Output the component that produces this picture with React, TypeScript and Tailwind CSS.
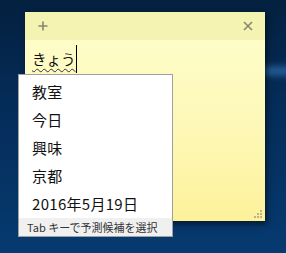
import React from "react";

const items = ["教室", "今日", "興味", "京都", "2016年5月19日"];

export default function App() {
  return (
    <div className="relative w-[286px] h-[253px] overflow-hidden bg-[linear-gradient(180deg,#04203f_0%,#052c58_40%,#063a70_100%)] [font-family:'Noto_Sans_CJK_JP','Noto_Sans',sans-serif]">
      {/* wallpaper streak */}
      <div className="absolute left-[262px] top-[66px] w-[40px] h-[10px] rounded-full bg-[#2f6fae] opacity-70 blur-[3px]" />

      {/* sticky note window */}
      <div className="absolute left-[25px] top-[12px] w-[240px] h-[209px] flex flex-col shadow-[2px_3px_6px_rgba(0,0,0,0.55)]">
        <div className="h-[28px] shrink-0 bg-[#f5f3b2] flex items-center justify-between pl-[13px] pr-[12px]">
          <svg width="10" height="10" viewBox="0 0 10 10">
            <path d="M5 0.5V9.5M0.5 5H9.5" stroke="#868670" strokeWidth="1.6" />
          </svg>
          <svg width="10" height="10" viewBox="0 0 10 10">
            <path d="M1 1L9 9M9 1L1 9" stroke="#868670" strokeWidth="1.6" />
          </svg>
        </div>
        <div className="flex-1 relative bg-[linear-gradient(180deg,#fefcc8_0%,#fdf8b6_50%,#fdf19a_100%)] pl-[7px] pt-[5px]">
          <div className="flex items-start">
            <span className="text-[14.5px] leading-[28px] text-[#111] underline decoration-wavy decoration-[#333] decoration-1 underline-offset-[3px]">
              きょう
            </span>
            <span className="w-px h-[28px] bg-black" />
          </div>
          <svg className="absolute right-[2px] bottom-[2px]" width="9" height="9" viewBox="0 0 9 9">
            <rect x="6" y="0" width="2" height="2" fill="#b9b48a" />
            <rect x="3" y="3" width="2" height="2" fill="#b9b48a" />
            <rect x="6" y="3" width="2" height="2" fill="#b9b48a" />
            <rect x="0" y="6" width="2" height="2" fill="#b9b48a" />
            <rect x="3" y="6" width="2" height="2" fill="#b9b48a" />
            <rect x="6" y="6" width="2" height="2" fill="#b9b48a" />
          </svg>
        </div>
      </div>

      {/* IME candidate popup */}
      <div className="absolute left-[18px] top-[74px] w-[155px] h-[163px] border border-[#a0a0a0] bg-white flex flex-col">
        <div className="pt-[3px] flex flex-col">
          {items.map((t) => (
            <div key={t} className="h-[28px] flex items-center pl-[13px] text-[15px] tracking-[0.3px] text-[#111]">
              {t}
            </div>
          ))}
        </div>
        <div className="flex-1 bg-[#f0f0f0] flex items-center pl-[8px] text-[11px] text-[#333]">
          Tab キーで予測候補を選択
        </div>
      </div>
    </div>
  );
}
